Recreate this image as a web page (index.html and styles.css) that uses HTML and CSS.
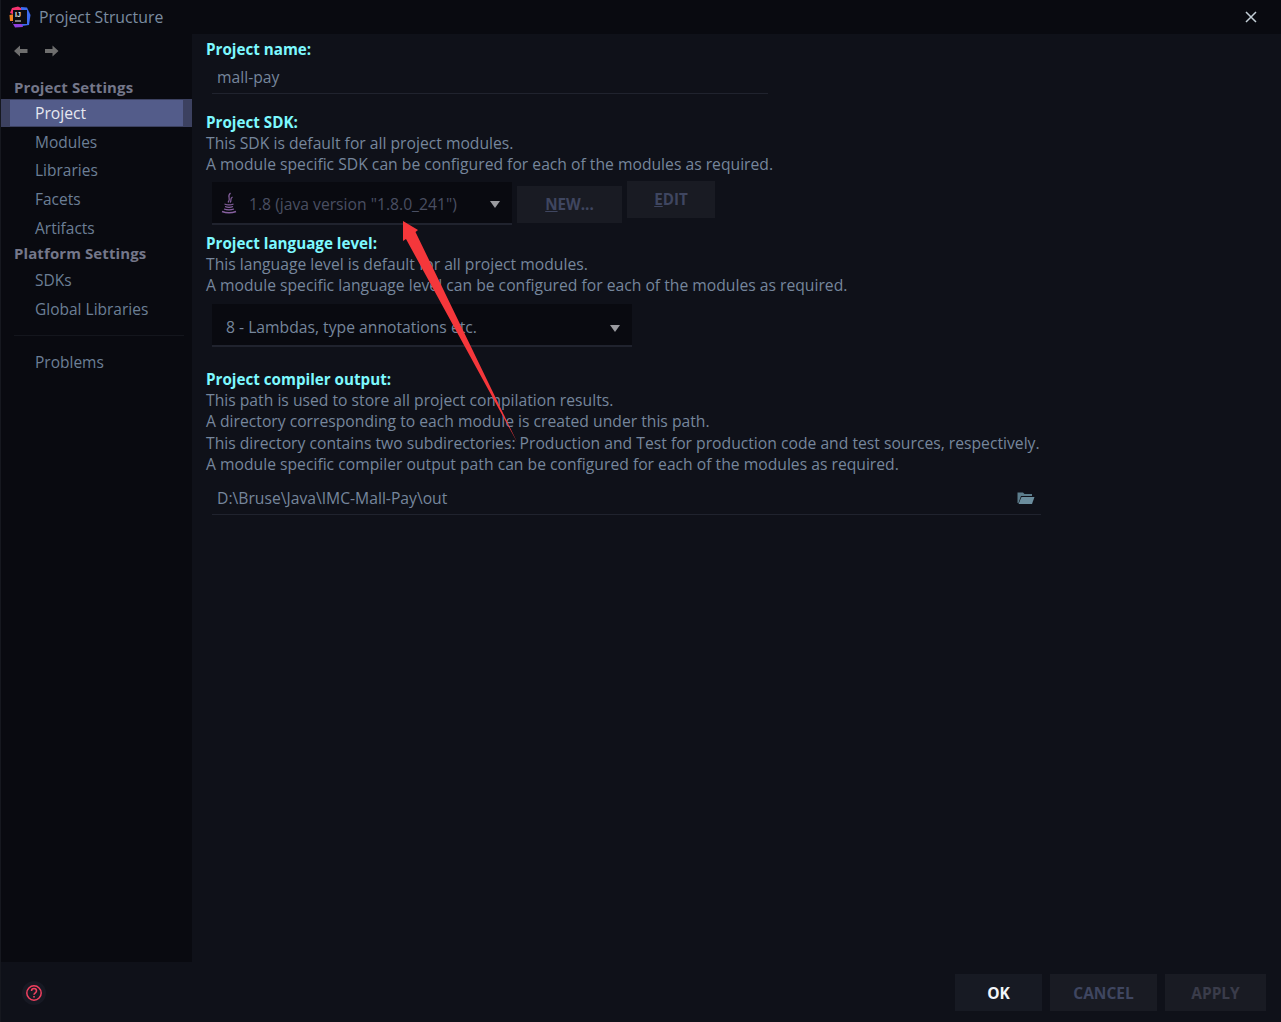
FILE: index.html
```html
<!DOCTYPE html>
<html lang="en">
<head>
    <meta charset="UTF-8">
    <title>Project Structure</title>
    <link rel="stylesheet" href="styles.css">
</head>
<body>
    <div class="dialog">
        <div class="titlebar">
            <svg class="app-logo" width="22" height="22" viewBox="0 0 22 22">
                <path d="M1 7 L3 2 L9 0.5 L14 3 L6 9 Z" fill="#f5336f"/>
                <path d="M12 1 L18 1.5 L21.5 9 L20 19 L13 20 Z" fill="#3d6bf0"/>
                <path d="M0.5 9 L5 8 L5 15 L1 15 Z" fill="#f58220"/>
                <path d="M3 16 L12 16 L14 21 L6 21.5 Z" fill="#8f3fe0"/>
                <rect x="4" y="4" width="14" height="14" fill="#0b0b0f"/>
                <text class="logo-text" x="6" y="11">IJ</text>
                <rect x="6" y="14.5" width="6" height="1" fill="#e8e8e8"/>
            </svg>
            <span class="title">Project Structure</span>
            <svg class="close-icon" width="12" height="12" viewBox="0 0 12 12">
                <path d="M1 1 L11 11 M11 1 L1 11" stroke="#c3ced6" stroke-width="1.5"/>
            </svg>
        </div>
        <div class="content">
            <aside class="sidebar">
                <div class="nav-arrows">
                    <svg width="14" height="12" viewBox="0 0 14 12"><path d="M0 6 L6 0.5 L6 4 L13.5 4 L13.5 8 L6 8 L6 11.5 Z" fill="#6e6e6e"/></svg>
                    <svg width="14" height="12" viewBox="0 0 14 12"><path d="M13.5 6 L7.5 0.5 L7.5 4 L0 4 L0 8 L7.5 8 L7.5 11.5 Z" fill="#6e6e6e"/></svg>
                </div>
                <div class="nav-heading first">Project Settings</div>
                <div class="nav-item selected"><span>Project</span></div>
                <div class="nav-item">Modules</div>
                <div class="nav-item">Libraries</div>
                <div class="nav-item">Facets</div>
                <div class="nav-item">Artifacts</div>
                <div class="nav-heading">Platform Settings</div>
                <div class="nav-item">SDKs</div>
                <div class="nav-item">Global Libraries</div>
                <div class="nav-divider"></div>
                <div class="nav-item">Problems</div>
            </aside>
            <main class="main">
                <h2 class="label">Project name:</h2>
                <div class="field name-field">mall-pay</div>

                <h2 class="label sdk-label">Project SDK:</h2>
                <p class="desc">This SDK is default for all project modules.</p>
                <p class="desc">A module specific SDK can be configured for each of the modules as required.</p>
                <div class="sdk-row">
                    <div class="select sdk-select">
                        <svg class="java-icon" width="16" height="22" viewBox="0 0 16 22" fill="none" stroke="#86609f" stroke-width="1.2">
                            <path d="M9.5 1 C5 5 11 6 7 10.5 M11.5 5 C8 7 11.5 8 9 10.5"/>
                            <path d="M3.5 12 C6 13 10 13 12.5 12 M4 14.5 C6 15.3 10 15.3 12 14.5 M3 17 C6 18 10 18 13 17"/>
                            <path d="M1 19.5 C5 21 11 21 15 19.5" stroke-width="1.5"/>
                        </svg>
                        <span class="select-text muted">1.8 (java version "1.8.0_241")</span>
                        <span class="caret"></span>
                    </div>
                    <button class="btn new-btn"><u>N</u>EW...</button>
                    <button class="btn edit-btn"><u>E</u>DIT</button>
                </div>

                <h2 class="label lang-label">Project language level:</h2>
                <p class="desc">This language level is default for all project modules.</p>
                <p class="desc">A module specific language level can be configured for each of the modules as required.</p>
                <div class="select lang-select">
                    <span class="select-text">8 - Lambdas, type annotations etc.</span>
                    <span class="caret"></span>
                </div>

                <h2 class="label output-label">Project compiler output:</h2>
                <p class="desc">This path is used to store all project compilation results.</p>
                <p class="desc">A directory corresponding to each module is created under this path.</p>
                <p class="desc">This directory contains two subdirectories: Production and Test for production code and test sources, respectively.</p>
                <p class="desc">A module specific compiler output path can be configured for each of the modules as required.</p>
                <div class="field output-field">
                    <span>D:\Bruse\Java\IMC-Mall-Pay\out</span>
                    <svg width="18" height="14" viewBox="0 0 18 14">
                        <path d="M0.5 12 L0.5 1.5 L6 1.5 L7.5 3 L15 3 L15 5 L4 5 L1.5 12 Z" fill="#5c7d8c"/>
                        <path d="M4.5 6 L17.5 6 L15 13 L1.5 13 Z" fill="#6b8d9d"/>
                    </svg>
                </div>
            </main>
        </div>
        <div class="footer">
            <div class="help"><svg width="18" height="18" viewBox="0 0 18 18">
                <circle cx="9" cy="9" r="7.2" fill="none" stroke="#f0405f" stroke-width="1.5"/>
                <path d="M6.5 7 C6.5 3.8 11.5 3.8 11.5 7 C11.5 8.8 9 8.8 9 10.8" fill="none" stroke="#f0405f" stroke-width="1.5"/>
                <rect x="8.2" y="12" width="1.6" height="1.6" fill="#f0405f"/>
            </svg></div>
            <div class="footer-buttons">
                <button class="btn footer-btn ok-btn">OK</button>
                <button class="btn footer-btn cancel-btn">CANCEL</button>
                <button class="btn footer-btn apply-btn">APPLY</button>
            </div>
        </div>
        <!-- red annotation arrow drawn over the screenshot -->
        <svg class="annotation" width="1281" height="1022" viewBox="0 0 1281 1022">
            <path d="M403 221 L418 230 L415.5 232 L517 442 L406 239 L403 241 Z" fill="#f5373b"/>
        </svg>
    </div>
</body>
</html>
```

FILE: styles.css
```css
* {
    box-sizing: border-box;
}
html, body {
    margin: 0;
    height: 100%;
}
body {
    font-family: "Open Sans", "Noto Sans", sans-serif;
    font-size: 15.7px;
    background-color: #0f1119;
    color: #76869c;
}
.dialog {
    position: relative;
    width: 1281px;
    height: 1022px;
    display: flex;
    flex-direction: column;
    overflow: hidden;
    border-left: 1px solid #16181f;
}
.titlebar {
    height: 34px;
    flex-shrink: 0;
    display: flex;
    align-items: center;
    background-color: #090a10;
    padding-left: 8px;
}
.app-logo {
    margin-right: 8px;
}
.logo-text {
    font-family: "Liberation Sans", sans-serif;
    font-size: 7px;
    font-weight: bold;
    fill: #e8e8e8;
}
.title {
    color: #7b8ca0;
    font-size: 15.8px;
}
.close-icon {
    margin-left: auto;
    margin-right: 24px;
}
.content {
    flex: 1;
    display: flex;
    min-height: 0;
}
.sidebar {
    width: 191px;
    flex-shrink: 0;
    background-color: #090a10;
}
.nav-arrows {
    height: 32px;
    display: flex;
    gap: 17px;
    align-items: center;
    padding: 2px 0 0 13px;
}
.nav-heading {
    height: 24px;
    line-height: 23px;
    padding-left: 13px;
    font-size: 15px;
    font-weight: 700;
    letter-spacing: 0.1px;
    color: #74778a;
}
.nav-heading.first {
    margin-top: 9px;
    height: 24px;
    line-height: 24px;
}
.nav-item {
    height: 28.7px;
    line-height: 28.7px;
    padding-left: 34px;
    color: #6c7f96;
    font-size: 15.5px;
}
.nav-item.selected {
    height: 28px;
    margin-bottom: 0.7px;
    background-color: #3c4160;
    padding: 1px 9px 1px 9px;
    color: #e6e8f0;
    font-size: 15.7px;
}
.nav-item.selected span {
    display: block;
    height: 26px;
    line-height: 26px;
    background-color: #535c8a;
    padding-left: 25px;
}
.nav-divider {
    height: 1px;
    background-color: #14161d;
    margin: 11px 0 12px 13px;
    width: 170px;
}
.main {
    flex: 1;
    padding: 5px 0 0 14px;
}
.label {
    margin: 0;
    font-size: 15.2px;
    line-height: 21px;
    font-weight: 700;
    color: #7df9ff;
}
.desc {
    margin: 0;
    line-height: 21.3px;
    color: #76869c;
}
.field {
    height: 32px;
    width: 556px;
    margin-left: 6px;
    padding-left: 5px;
    line-height: 31px;
    border-bottom: 1px solid #20232e;
    color: #76869c;
}
.name-field {
    margin-top: 2px;
}
.sdk-label {
    margin-top: 18px;
}
.sdk-row {
    display: flex;
    align-items: flex-start;
    height: 44px;
    margin-top: 6px;
}
.select {
    display: flex;
    align-items: center;
    background-color: #090a10;
    border-bottom: 2px solid #20232e;
    margin-left: 6px;
    padding-right: 12px;
}
.sdk-select {
    width: 300px;
    height: 43px;
    padding-left: 9px;
    padding-top: 3px;
}
.java-icon {
    margin-right: 12px;
    margin-top: -1px;
}
.select-text {
    flex: 1;
    color: #76869c;
}
.select-text.muted {
    color: #4a4f62;
}
.caret {
    width: 0;
    height: 0;
    margin-top: 2px;
    border-left: 5px solid transparent;
    border-right: 5px solid transparent;
    border-top: 7px solid #9a9ba0;
}
.btn {
    border: none;
    background-color: #191b23;
    font-family: inherit;
    font-weight: 700;
    font-size: 15.2px;
    color: #3f4660;
    padding: 0;
}
.new-btn {
    width: 105px;
    height: 37px;
    margin: 4px 0 0 5px;
}
.edit-btn {
    width: 88px;
    height: 37px;
    margin: -1px 0 0 5px;
}
.lang-label {
    margin-top: 7px;
}
.lang-select {
    width: 420px;
    height: 43px;
    margin-top: 8px;
    padding-left: 14px;
    padding-top: 5px;
}
.output-label {
    margin-top: 22px;
}
.output-field {
    width: 829px;
    height: 33px;
    margin-top: 7px;
    display: flex;
    align-items: center;
    justify-content: space-between;
    padding-right: 6px;
}
.footer {
    height: 60px;
    flex-shrink: 0;
    display: flex;
    align-items: flex-start;
    justify-content: space-between;
    padding: 12px 15px 0 21px;
}
.help {
    width: 24px;
    height: 24px;
    margin-top: 7px;
    border-radius: 50%;
    background-color: #171923;
    display: flex;
    align-items: center;
    justify-content: center;
}
.footer-buttons {
    display: flex;
    gap: 8px;
}
.footer-btn {
    width: 87px;
    height: 37px;
    font-size: 15.5px;
}
.cancel-btn {
    width: 107px;
}
.apply-btn {
    width: 101px;
    color: #3a3c4a;
}
.ok-btn {
    background-color: #171a23;
    color: #f2f6fa;
}
.annotation {
    position: absolute;
    left: -1px;
    top: 0;
    pointer-events: none;
}
```
